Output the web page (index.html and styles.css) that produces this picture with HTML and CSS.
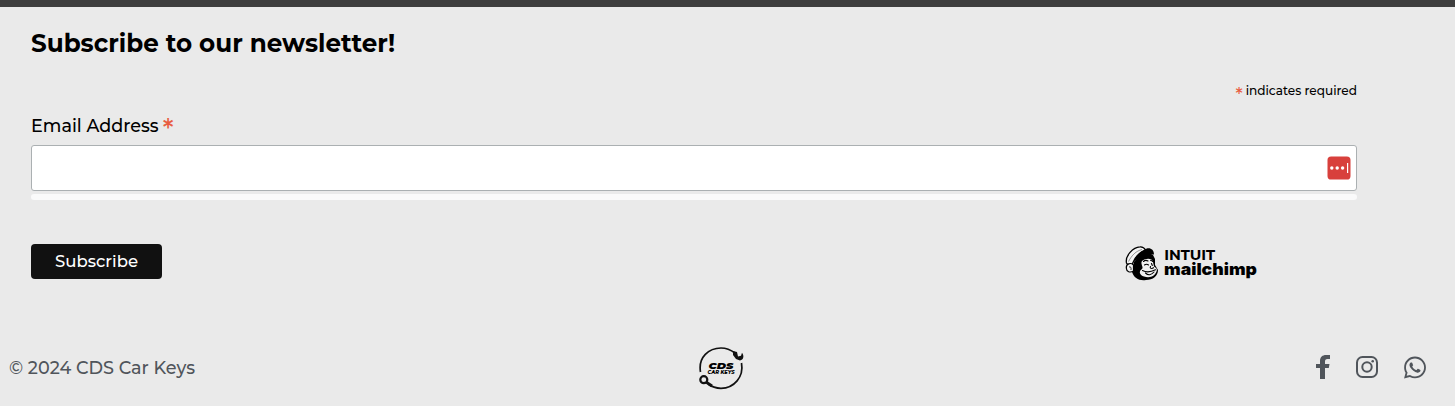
FILE: index.html
```html
<!DOCTYPE html>
<html lang="en">
<head>
<meta charset="utf-8">
<title>CDS Car Keys</title>
<link rel="stylesheet" href="styles.css">
</head>
<body>
<div class="topbar"></div>
<form class="signup">
  <h2 class="title">Subscribe to our newsletter!</h2>
  <p class="note"><span class="star">*</span><span class="note-text">indicates required</span></p>
  <label class="label" for="email"><span class="label-text">Email Address</span><span class="star star-lg">*</span></label>
  <div class="field">
    <input class="input" id="email" type="email">
    <svg class="manager" viewBox="0 0 24 24"><rect x=".5" y=".5" width="23" height="23" rx="3.6" fill="#d8403c"/><g fill="#fff"><circle cx="4.8" cy="12" r="1.7"/><circle cx="10.2" cy="12" r="1.7"/><circle cx="15.6" cy="12" r="1.7"/><rect x="20" y="7" width="1.2" height="10"/></g></svg>
  </div>
  <div class="response"></div>
  <div class="actions">
    <button class="submit" type="button"><span class="submit-text">Subscribe</span></button>
    <svg class="mailchimp" viewBox="0 0 134 38">
      <path d="M7 24L9 16 14 10 22 6 28 9 30 13 30 19 33 24C33 30 28 34 21 34C14 35 9 32 7 26Z" fill="#000"/>
      <path d="M1.5 17C0 10 8 1 15 .8C18 .6 19.5 2 20.5 4C15 6 10 11 7.5 17.5C5 19.5 2.5 19.5 1.5 17Z" fill="#f4f4f4" stroke="#000" stroke-width="1.3"/>
      <path d="M3.5 15.5C7 9 11 5 17 3.5" fill="none" stroke="#000" stroke-width=".4"/>
      <path d="M19 4C23 .5 29 2 29 8.5C24 8 15 9 9 16C10 11 14 6 19 4Z" fill="#000"/>
      <path d="M8.5 19C5.5 16 1 18 1.3 22C1.5 26 5 27 8.5 25Z" fill="#f4f4f4" stroke="#000" stroke-width="1.2"/>
      <path d="M4 21Q6.5 20 6 24" fill="none" stroke="#000" stroke-width=".8"/>
      <path d="M17 15C21 11.5 27.5 12 28 16L29 20.5C31 22 32.2 22.5 31.8 24.5C30.5 30 25 32.5 19 30.5C15 29.5 13 25.5 17 23C19 21 15 18 17 15Z" fill="#f0f0f0"/>
      <path d="M18.5 15.5Q20.5 13.5 23 15M25.5 14.2Q26.8 14.2 27.5 15.5M19.5 19Q21.5 17.5 23.5 19M26.5 17.5L27.3 19.5M25.5 20.5Q24.5 22.5 27 22.5L28.5 21.7M17.5 24.5Q23 27.5 30.5 23.8M20.5 27Q24.5 31 29 26" fill="none" stroke="#000" stroke-width="1.1" stroke-linecap="round"/>
      <text class="mc-small" x="39.2" y="14" textLength="51" lengthAdjust="spacingAndGlyphs">INTUIT</text>
      <text class="mc-large" x="39" y="29.3" textLength="93" lengthAdjust="spacingAndGlyphs">mailchimp</text>
    </svg>
  </div>
</form>
<footer class="footer">
  <span class="copy">© 2024 CDS Car Keys</span>
  <svg class="brand" viewBox="0 0 46 44">
    <g fill="none" stroke="#111" stroke-width="1.7"><path d="M1.5 25C-1 10 10 1 22 1C28 1 32 3 36 6"/><path d="M42.5 16C45 30 35 41.3 22 41.3C17 41.3 13 40 9 37"/></g>
    <path d="M34 4L38 5 39 9.5 42 8.8 43 5.8C45.5 9 44.5 13 41 13.5L37 12 34 8Z" fill="#111"/>
    <circle cx="4.8" cy="32.7" r="3.5" fill="none" stroke="#111" stroke-width="2.2"/><path d="M7 35L13 39" stroke="#111" stroke-width="2.8"/>
    <text class="brand-main" x="9.5" y="21.6" textLength="25" lengthAdjust="spacingAndGlyphs">CDS</text>
    <text class="brand-sub" x="8.5" y="26.9" textLength="27" lengthAdjust="spacingAndGlyphs">CAR KEYS</text>
  </svg>
  <nav class="social">
    <svg class="fb" viewBox="0 0 14 24" fill="#50555b"><path d="M4 24V13H0V9H4V6C4 2 6.5 0 10 0H14V4H11.5C9.5 4 9 5 9 6.5V9H13.5L12.8 13H9V24Z"/></svg>
    <svg class="ig" viewBox="0 0 22 22" fill="none" stroke="#50555b" stroke-width="2"><rect x="1" y="1" width="20" height="20" rx="5.5"/><circle cx="11" cy="11" r="4.7"/><circle cx="16.7" cy="5.3" r="1.3" fill="#50555b" stroke="none"/></svg>
    <svg class="wa" viewBox="0 0 448 512" fill="#50555b"><path d="M380.9 97.1C339 55.1 283.2 32 223.9 32c-122.4 0-222 99.6-222 222 0 39.1 10.2 77.3 29.6 111L0 480l117.7-30.9c32.4 17.7 68.9 27 106.1 27h.1c122.3 0 224.1-99.6 224.1-222 0-59.3-25.2-115-67.1-157zm-157 341.6c-33.2 0-65.7-8.9-94-25.7l-6.7-4-69.8 18.3L72 359.2l-4.4-7c-18.5-29.4-28.2-63.3-28.2-98.2 0-101.7 82.8-184.5 184.6-184.5 49.3 0 95.6 19.2 130.4 54.1 34.8 34.9 56.2 81.2 56.1 130.5 0 101.8-84.9 184.6-186.6 184.6zm101.2-138.2c-5.5-2.8-32.8-16.2-37.9-18-5.1-1.9-8.8-2.8-12.5 2.8-3.7 5.6-14.3 18-17.6 21.8-3.2 3.7-6.5 4.2-12 1.4-32.6-16.3-54-29.1-75.5-66-5.7-9.8 5.7-9.1 16.3-30.3 1.8-3.7.9-6.9-.5-9.7-1.4-2.8-12.5-30.1-17.1-41.2-4.5-10.8-9.1-9.3-12.5-9.5-3.2-.2-6.9-.2-10.6-.2-3.7 0-9.7 1.4-14.8 6.9-5.1 5.6-19.4 19-19.4 46.3 0 27.3 19.9 53.7 22.6 57.4 2.8 3.7 39.1 59.7 94.8 83.8 35.2 15.2 49 16.5 66.6 13.9 10.7-1.6 32.8-13.4 37.4-26.4 4.6-13 4.6-24.1 3.2-26.4-1.3-2.5-5-3.9-10.5-6.6z"/></svg>
  </nav>
</footer>
</body>
</html>
```
FILE: styles.css
```css
* { box-sizing: border-box; }
body { margin: 0; height: 406px; overflow: hidden; background: #eaeaea; font-family: Montserrat, Inter, sans-serif; font-weight: 500; color: #000; }
.topbar { height: 7px; background: #3e3e3e; }
.signup { width: 1326px; margin-left: 31px; }
.title { margin: 0; padding-top: 21px; height: 74px; font-size: 24.64px; line-height: 31px; font-weight: 700; white-space: nowrap; }
.note { margin: 0; height: 21px; display: flex; justify-content: flex-end; gap: 3px; font-size: 12.1px; line-height: 20px; }
.star { color: #e85c41; font-size: 18px; line-height: 28px; font-weight: 500; }
.label { display: flex; gap: 4px; height: 43px; padding-top: 13px; font-size: 17.6px; line-height: 22px; }
.star-lg { font-size: 27px; line-height: 29px; }
.field { display: flex; position: relative; height: 46px; }
.input { flex: 1; border: 1px solid #abb0b2; border-radius: 3px; background: #fff; outline: 0; }
.manager { position: absolute; right: 6px; top: 11px; width: 24px; height: 24px; }
.response { height: 6px; margin-top: 3px; background: #fafafa; border-radius: 3px; }
.actions { display: flex; justify-content: space-between; align-items: flex-start; margin-top: 44px; padding-right: 98px; height: 83px; }
.submit { width: 131px; height: 35px; padding: 0; border: 0; border-radius: 4px; background: #111; color: #fff; font: 500 16.5px/35px Montserrat, Inter, sans-serif; }
.mailchimp { width: 134px; height: 38px; margin-top: 2px; }
.mc-small { font: 700 13.6px Montserrat, sans-serif; }
.mc-large { font: 900 16.5px Inter, sans-serif; }
.footer { display: grid; grid-template-columns: 690px 1fr 112px; align-items: center; height: 80px; padding: 0 29px 0 9px; color: #50555b; }
.copy { font-size: 17.6px; }
.brand { width: 46px; height: 44px; margin-top: 3px; }
.brand-main { font: italic 900 9.5px Montserrat, sans-serif; }
.brand-sub { font: italic 800 5px Montserrat, sans-serif; }
.social { display: flex; align-items: center; justify-content: space-between; }
.fb { width: 14px; height: 24px; margin-left: 2px; }
.ig { width: 22px; height: 22px; }
.wa { width: 22px; height: 25px; }
```
